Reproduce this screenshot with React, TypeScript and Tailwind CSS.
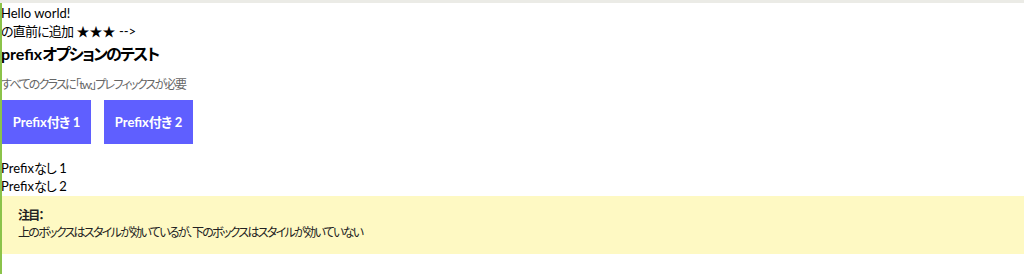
function J({ children, t = "n" }: { children: React.ReactNode; t?: "n" | "s" }) {
  return <span className={t === "n" ? "tracking-[-1.7px]" : "tracking-[-0.8px]"}>{children}</span>;
}

export default function App() {
  return (
    <div className="min-h-[274px] bg-white border-t-[3px] border-[#ebebe6] flex text-black">
      <div className="w-[2px] bg-[#8bc34a] shrink-0 relative z-10" />
      <div className="flex-1 -ml-[1px] flex flex-col font-['Lato','Noto_Sans_CJK_JP',sans-serif] [font-feature-settings:'palt'] text-[13px] leading-[18px]">
        <div className="pt-[1px]">Hello world!</div>
        <div><J t="s">の直前に追加</J> ★★★ --&gt;</div>
        <h1 className="text-[16px] leading-[24px] font-bold mt-[2px]">prefix<J>オプションのテスト</J></h1>
        <p className="text-[12px] text-[#666] mt-[10px] leading-[18px]"><J>すべてのクラスに「tw:」プレフィックスが必要</J></p>
        <div className="flex gap-[13px] mt-[6px] pl-[1px]">
          <div className="w-[89px] h-[44px] bg-[#5f5fff] text-white font-bold flex items-center justify-center">
            <span>Prefix<J t="s">付き</J> 1</span>
          </div>
          <div className="w-[89px] h-[44px] bg-[#5f5fff] text-white font-bold flex items-center justify-center">
            <span>Prefix<J t="s">付き</J> 2</span>
          </div>
        </div>
        <div className="mt-[15px]">Prefix<J t="s">なし</J> 1</div>
        <div>Prefix<J t="s">なし</J> 2</div>
        <div className="bg-[#fef9c3] border-l-[2px] border-[#c9b63a] -ml-[1px] mt-[1px] h-[58px] pl-[16px] pt-[11px] text-[12px] leading-[17px] text-[#222]">
          <div className="font-bold"><J>注目：</J></div>
          <div><J>上のボックスはスタイルが効いているが、下のボックスはスタイルが効いていない</J></div>
        </div>
      </div>
    </div>
  );
}
